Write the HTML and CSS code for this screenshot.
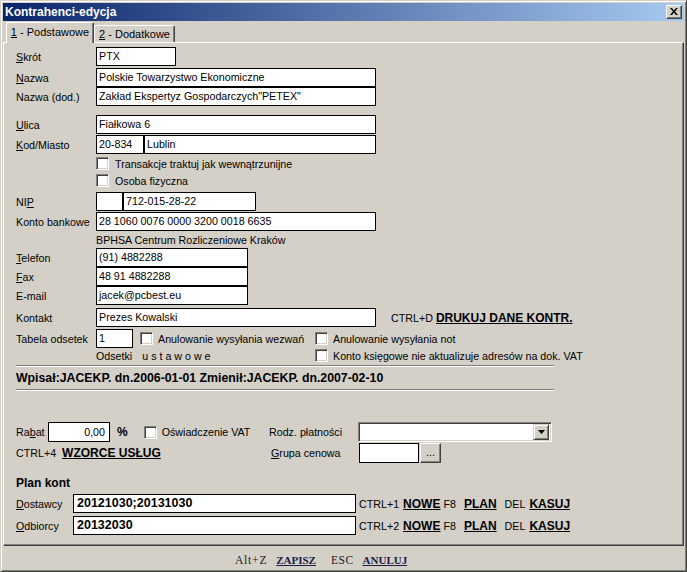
FILE: index.html
```html
<!DOCTYPE html>
<html lang="pl">
<head>
<meta charset="utf-8">
<title>Kontrahenci-edycja</title>
<link rel="stylesheet" href="styles.css">
</head>
<body>
<div class="window">
  <div class="titlebar">
    <span class="title">Kontrahenci-edycja</span>
    <span class="close"><svg width="8" height="7" viewBox="0 0 8 7"><path d="M0 0h2l2 2.5L6 0h2L5 3.5 8 7H6L4 4.5 2 7H0l3-3.5z" fill="#000"/></svg></span>
  </div>
  <div class="tabs">
    <div class="tab active"><span><u>1</u> - Podstawowe</span></div>
    <div class="tab"><span><u>2</u> - Dodatkowe</span></div>
  </div>
  <div class="panel">
    <div class="row skrot"><span class="lbl"><u>S</u>krót</span><span class="field w-skrot">PTX</span></div>
    <div class="row nazwa"><span class="lbl"><u>N</u>azwa</span><span class="field w-long">Polskie Towarzystwo Ekonomiczne</span></div>
    <div class="row"><span class="lbl">Nazwa (dod.)</span><span class="field w-long">Zakład Ekspertyz Gospodarczych"PETEX"</span></div>
    <div class="row ulica"><span class="lbl"><u>U</u>lica</span><span class="field w-long">Fiałkowa 6</span></div>
    <div class="row mt1"><span class="lbl"><u>K</u>od/Miasto</span><span class="field w-kod">20-834</span><span class="field w-miasto">Lublin</span></div>
    <div class="row check mt1"><span class="lbl"></span><span class="cb"></span><span class="cbtext">Transakcje traktuj jak wewnątrzunijne</span></div>
    <div class="row check"><span class="lbl"></span><span class="cb"></span><span class="cbtext">Osoba fizyczna</span></div>
    <div class="row nip"><span class="lbl">NI<u>P</u></span><span class="field w-pre"></span><span class="field w-nip">712-015-28-22</span></div>
    <div class="row mt1"><span class="lbl">Konto bankowe</span><span class="field w-long">28 1060 0076 0000 3200 0018 6635</span></div>
    <div class="row note mt1"><span class="lbl"></span><span>BPHSA Centrum Rozliczeniowe Kraków</span></div>
    <div class="row mt1"><span class="lbl"><u>T</u>elefon</span><span class="field w-tel">(91) 4882288</span></div>
    <div class="row"><span class="lbl"><u>F</u>ax</span><span class="field w-tel">48 91 4882288</span></div>
    <div class="row"><span class="lbl">E-mail</span><span class="field w-tel">jacek@pcbest.eu</span></div>
    <div class="row kontakt"><span class="lbl">Kontakt</span><span class="field w-long">Prezes Kowalski</span>
      <span class="hot hot-d">CTRL+D</span><span class="link">DRUKUJ DANE KONTR.</span></div>
    <div class="row tabela"><span class="lbl">Tabela odsetek</span><span class="field w-tab">1</span>
      <span class="cbgroup g-wez"><span class="cb"></span><span class="cbtext">Anulowanie wysyłania wezwań</span></span>
      <span class="cbgroup"><span class="cb"></span><span class="cbtext">Anulowanie wysyłania not</span></span>
    </div>
    <div class="row note odsetki"><span class="lbl"></span><span class="ods">Odsetki<span class="spaced">u s t a w o w e</span></span>
      <span class="cbgroup"><span class="cb"></span><span class="cbtext">Konto księgowe nie aktualizuje adresów na dok. VAT</span></span>
    </div>
    <div class="sep sep1"></div>
    <div class="info">Wpisał:JACEKP. dn.2006-01-01 Zmienił:JACEKP. dn.2007-02-10</div>
    <div class="sep sep2"></div>

    <div class="row rabat">
      <div class="left">
        <span class="lbl-rabat">Ra<u>b</u>at</span><span class="field w-rabat">0,00</span><span class="pct">%</span>
        <span class="cbgroup g-vat"><span class="cb"></span><span class="cbtext">Oświadczenie VAT</span></span>
      </div>
      <span class="lbl2">Rodz. płatności</span>
      <span class="combo"><span class="combo-btn"><svg width="7" height="4" viewBox="0 0 7 4"><path d="M0 0h7L3.5 4z" fill="#000"/></svg></span></span>
    </div>
    <div class="row grupa">
      <div class="left">
        <span class="hot">CTRL+4</span><span class="link link-w">WZORCE USŁUG</span>
      </div>
      <span class="lbl2 lbl2-g"><u>G</u>rupa cenowa</span>
      <span class="field w-grupa"></span><span class="btn-dots">...</span>
    </div>

    <div class="plan">Plan kont</div>
    <div class="row konto dost"><span class="lbl-k"><u>D</u>ostawcy</span><span class="field bold w-konto">20121030;20131030</span>
      <span class="hot hot-k">CTRL+1</span><span class="link l-nowe">NOWE</span><span class="hot l-f8">F8</span><span class="link l-plan">PLAN</span><span class="hot l-del">DEL</span><span class="link l-kasuj">KASUJ</span></div>
    <div class="row konto odb"><span class="lbl-k"><u>O</u>dbiorcy</span><span class="field bold w-konto">20132030</span>
      <span class="hot hot-k">CTRL+2</span><span class="link l-nowe">NOWE</span><span class="hot l-f8">F8</span><span class="link l-plan">PLAN</span><span class="hot l-del">DEL</span><span class="link l-kasuj">KASUJ</span></div>
  </div>
  <div class="footer">
    <span class="f-key f-alt">Alt+Z</span><span class="f-link">ZAPISZ</span><span class="f-key f-esc">ESC</span><span class="f-link">ANULUJ</span>
  </div>
</div>
</body>
</html>
```

FILE: styles.css
```css
* { box-sizing: border-box; }
html, body { margin: 0; padding: 0; background: #d4d0c8; }
body {
  font-family: "Liberation Sans", Arial, sans-serif;
  font-size: 10.7px;
  color: #000;
}
u { text-decoration: underline; text-underline-offset: 1px; }

.window {
  width: 687px;
  height: 572px;
  background: #d4d0c8;
  border: 1px solid;
  border-color: #d4d0c8 #404040 #404040 #d4d0c8;
  box-shadow: inset 1px 1px #fff, inset -1px -1px #808080;
  padding: 2px;
  display: flex;
  flex-direction: column;
  overflow: hidden;
}

.titlebar {
  height: 18px;
  flex: 0 0 18px;
  background: linear-gradient(to right, #0a246a, #a6caf0);
  display: flex;
  align-items: center;
  justify-content: space-between;
  padding: 0 2px 0 2px;
}
.title {
  color: #fff;
  font-weight: bold;
  font-size: 12px;
}
.close {
  width: 16px;
  height: 14px;
  background: #d4d0c8;
  border: 1px solid;
  border-color: #fff #404040 #404040 #fff;
  box-shadow: inset -1px -1px #808080;
  display: flex;
  align-items: center;
  justify-content: center;
  padding-bottom: 1px;
}

.tabs {
  height: 21px;
  flex: 0 0 21px;
  display: flex;
  align-items: flex-end;
  padding-left: 3px;
  position: relative;
  z-index: 1;
}
.tab {
  height: 17px;
  width: 81px;
  border: 1px solid;
  border-bottom: none;
  border-color: #fff #404040 #fff #fff;
  box-shadow: inset -1px 0 #808080;
  border-radius: 2px 2px 0 0;
  display: flex;
  align-items: center;
  justify-content: center;
  padding-bottom: 1px;
  background: #d4d0c8;
  font-size: 11px;
}
.tab.active {
  width: 88px;
  height: 21px;
  margin-bottom: -1px;
  padding-bottom: 2px;
}

.panel {
  height: 504px;
  flex: 0 0 504px;
  border: 1px solid;
  border-color: #fff #404040 #404040 #fff;
  box-shadow: inset -1px -1px #808080;
  padding: 0 12px;
  display: flex;
  flex-direction: column;
}

.row {
  display: flex;
  align-items: center;
  height: 19px;
  flex: 0 0 auto;
}
.mt1 { margin-top: 1px; }
.skrot { margin-top: 4px; }
.nazwa { margin-top: 2px; }
.ulica { margin-top: 9px; }
.nip { margin-top: 3px; }
.kontakt { margin-top: 3px; }
.tabela { margin-top: 2px; }
.check { height: 17px; }
.note { height: 15px; }

.lbl { width: 80px; flex: 0 0 80px; }

.field {
  height: 19px;
  border: 1px solid #000;
  background: #fff;
  padding: 0 2px;
  line-height: 17px;
  white-space: nowrap;
  overflow: hidden;
  flex: 0 0 auto;
}
.bold { font-weight: bold; font-size: 12.5px; }
.w-skrot { width: 80px; }
.w-long { width: 280px; }
.w-kod { width: 48px; }
.w-miasto { width: 232px; }
.w-pre { width: 27px; }
.w-nip { width: 133px; }
.w-tel { width: 152px; }
.w-tab { width: 37px; }

.cb {
  width: 13px;
  height: 13px;
  flex: 0 0 13px;
  background: #fff;
  border: 1px solid;
  border-color: #808080 #fff #fff #808080;
  box-shadow: inset 1px 1px #404040, inset -1px -1px #d4d0c8;
}
.cbtext { margin-left: 6px; white-space: nowrap; }
.cbgroup { display: flex; align-items: center; }
.g-wez { width: 175px; margin-left: 7px; }
.cbgroup .cbtext { margin-left: 5px; }

.ods { width: 219px; flex: 0 0 219px; white-space: nowrap; }
.spaced { margin-left: 10px; }
.odsetki { height: 15px; }

.hot { white-space: nowrap; }
.hot-d { margin-left: 15px; }
.link {
  font-weight: bold;
  font-size: 12px;
  text-decoration: underline;
  white-space: nowrap;
  margin-left: 3px;
}

.sep {
  height: 2px;
  width: 538px;
  border-top: 1px solid #808080;
  border-bottom: 1px solid #fff;
  flex: 0 0 2px;
}
.sep1 { margin-top: 2px; }
.sep2 { margin-top: 4px; }
.info {
  font-weight: bold;
  font-size: 12.3px;
  height: 14px;
  line-height: 14px;
  margin-top: 4px;
  white-space: nowrap;
}

.rabat { margin-top: 31px; height: 20px; }
.grupa { margin-top: 1px; height: 20px; }
.left { width: 253px; flex: 0 0 253px; display: flex; align-items: center; }
.lbl-rabat { width: 32px; }
.w-rabat { width: 62px; height: 20px; text-align: right; padding-right: 4px; line-height: 18px; }
.pct { font-weight: bold; font-size: 12px; margin-left: 7px; }
.g-vat { margin-left: 16px; }
.lbl2 { width: 89px; flex: 0 0 89px; }
.lbl2-g { padding-left: 2px; }
.link-w { margin-left: 6px; }

.combo {
  width: 194px;
  height: 20px;
  background: #fff;
  border: 1px solid;
  border-color: #808080 #fff #fff #808080;
  box-shadow: inset 1px 1px #404040, inset -1px -1px #d4d0c8;
  display: flex;
  justify-content: flex-end;
  align-items: center;
  padding: 2px;
}
.combo-btn {
  width: 16px;
  height: 16px;
  background: #d4d0c8;
  border: 1px solid;
  border-color: #d4d0c8 #404040 #404040 #d4d0c8;
  box-shadow: inset 1px 1px #fff, inset -1px -1px #808080;
  display: flex;
  align-items: center;
  justify-content: center;
}
.w-grupa { width: 60px; height: 20px; margin-left: 1px; }
.btn-dots {
  width: 21px;
  height: 20px;
  margin-left: 1px;
  border: 1px solid;
  border-color: #fff #404040 #404040 #fff;
  box-shadow: inset -1px -1px #808080;
  display: flex;
  align-items: center;
  justify-content: center;
  padding-bottom: 2px;
  font-size: 11px;
}

.plan {
  font-weight: bold;
  font-size: 12px;
  height: 14px;
  line-height: 14px;
  margin-top: 13px;
}
.dost { margin-top: 4px; }
.odb { margin-top: 3px; }
.lbl-k { width: 57px; flex: 0 0 57px; }
.w-konto { width: 283px; padding-left: 3px; }
.hot-k { margin-left: 3px; }
.l-nowe { margin-left: 4px; }
.l-f8 { margin-left: 3px; }
.l-plan { margin-left: 8px; }
.l-del { margin-left: 8px; }
.l-kasuj { margin-left: 4px; }

.footer {
  flex: 1 1 auto;
  display: flex;
  align-items: center;
  padding-left: 232px;
  padding-top: 4px;
  font-family: "Liberation Serif", "Times New Roman", serif;
  font-size: 11.5px;
}
.f-key { color: #202020; }
.f-alt { letter-spacing: 0.8px; }
.f-esc { margin-left: 15px; letter-spacing: 0.5px; }
.f-link {
  font-weight: bold;
  font-size: 11px;
  text-decoration: underline;
  color: #1c1c48;
  margin-left: 9px;
}
```
